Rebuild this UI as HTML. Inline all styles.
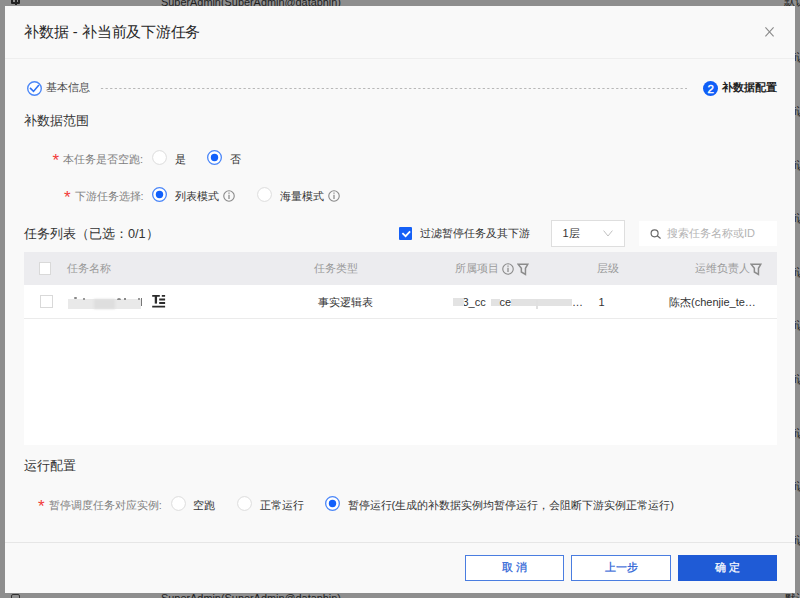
<!DOCTYPE html>
<html><head><meta charset="utf-8">
<style>
*{margin:0;padding:0;box-sizing:border-box}
html,body{width:800px;height:598px;overflow:hidden}
body{background:#8e8e8e;font-family:"Liberation Sans",sans-serif;position:relative;color:#333}
.a{position:absolute;white-space:nowrap}
.bgt{color:#1e1e1e;font-size:10.9px;line-height:14px}
.modal{position:absolute;left:5px;top:6px;width:790px;height:587px;background:#f9f9f9}
.t{font-size:11px;line-height:1;font-weight:500}
.lbl{color:#808080}
.req{color:#f23a3a;font-size:17px;line-height:1;font-weight:normal}
.r{position:absolute}
.btn{position:absolute;top:555px;height:25.5px;border:1px solid #4a7de0;background:#fff;color:#2c63d6;font-size:11px;display:flex;align-items:center;justify-content:center;font-weight:500;-webkit-text-stroke:0.25px currentColor}
.hd{color:#9a9a9a}
</style></head><body>
<!-- background page fragments -->
<div class="a bgt" style="left:161px;top:-5.5px">SuperAdmin(SuperAdmin@dataphin)</div>
<div class="a bgt" style="left:161px;top:590.5px">SuperAdmin(SuperAdmin@dataphin)</div>

<div class="a" style="left:11px;top:-4px;width:9px;height:8px;border:2px solid #222;border-radius:1px"></div>
<div class="a" style="left:15px;top:-4px;width:1.5px;height:9px;background:#222"></div>
<div class="a" style="left:11px;top:594px;width:9px;height:8px;border:1.5px solid #333;border-radius:2px"></div>
<div class="a bgt" style="left:784px;top:-6px;font-size:11px">默认</div>
<div class="a bgt" style="left:785px;top:591px;font-size:11px">默认</div>
<div class="a bgt" style="left:794px;top:50.4px;font-size:11px">i认</div>
<div class="a bgt" style="left:794px;top:104.0px;font-size:11px">i认</div>
<div class="a bgt" style="left:794px;top:157.6px;font-size:11px">i认</div>
<div class="a bgt" style="left:794px;top:211.2px;font-size:11px">i认</div>
<div class="a bgt" style="left:794px;top:264.8px;font-size:11px">i认</div>
<div class="a bgt" style="left:794px;top:318.4px;font-size:11px">i认</div>
<div class="a bgt" style="left:794px;top:372.0px;font-size:11px">i认</div>
<div class="a bgt" style="left:794px;top:425.6px;font-size:11px">i认</div>
<div class="a bgt" style="left:794px;top:479.2px;font-size:11px">i认</div>
<div class="a bgt" style="left:794px;top:532.8px;font-size:11px">i认</div>
<div class="modal"></div>

<!-- header -->
<div class="a" style="left:24px;top:22.2px;font-size:14.6px;letter-spacing:-0.25px;word-spacing:0.8px;line-height:20px;color:#262626;font-weight:500">补数据 - 补当前及下游任务</div>
<svg class="a" style="left:765.2px;top:27.2px" width="9" height="9.7" viewBox="0 0 9 9.7"><path d="M0.4 0.4L8.6 9.3M8.6 0.4L0.4 9.3" stroke="#8a8a8a" stroke-width="1.1" fill="none"/></svg>
<div class="a" style="left:5px;top:58px;width:790px;height:1px;background:#eeeeee"></div>

<!-- steps -->
<svg class="a" style="left:27px;top:80.75px" width="15" height="15" viewBox="0 0 15 15"><circle cx="7.5" cy="7.5" r="6.8" fill="#fff" stroke="#4d88f7" stroke-width="1.4"/><path d="M3.0 6.9L6.5 10.4L11.9 4.0" stroke="#2f72f5" stroke-width="1.6" fill="none"/></svg>
<div class="a t" style="left:46px;top:82.3px;color:#4a4a4a">基本信息</div>
<svg class="a" style="left:100px;top:88px" width="588" height="1"><line x1="0.9" y1="0.5" x2="587" y2="0.5" stroke="#b8b8b8" stroke-width="1" stroke-dasharray="2.3 2.3"/></svg>
<div class="a" style="left:703.3px;top:80.75px;width:15px;height:15px;border-radius:50%;background:#0f5ef7;color:#fff;font-size:11.6px;font-weight:normal;-webkit-text-stroke:0.4px #fff;text-align:center;line-height:15.5px">2</div>
<div class="a t" style="left:722px;top:82.3px;color:#222;font-weight:bold">补数据配置</div>

<div class="a" style="left:24px;top:113.8px;font-size:12.7px;line-height:14px;color:#333;font-weight:500">补数据范围</div>

<!-- row1 -->
<div class="a req" style="left:52.5px;top:152px">*</div>
<div class="a t lbl" style="left:63px;top:154px">本任务是否空跑:</div>
<svg class="r" style="left:151.9px;top:150.25px" width="15" height="15"><circle cx="7.5" cy="7.5" r="6.9" fill="#fff" stroke="#dcdcdc" stroke-width="1"/></svg>
<div class="a t" style="left:175px;top:154px">是</div>
<svg class="r" style="left:207.1px;top:150px" width="15" height="15"><circle cx="7.5" cy="7.5" r="6.85" fill="#fff" stroke="#4a86f8" stroke-width="1.3"/><circle cx="7.5" cy="7.5" r="3.7" fill="#1160fb"/></svg>
<div class="a t" style="left:230px;top:154px">否</div>

<!-- row2 -->
<div class="a req" style="left:64px;top:188.5px">*</div>
<div class="a t lbl" style="left:74.5px;top:190.5px">下游任务选择:</div>
<svg class="r" style="left:152.2px;top:186.9px" width="15" height="15"><circle cx="7.5" cy="7.5" r="6.85" fill="#fff" stroke="#4a86f8" stroke-width="1.3"/><circle cx="7.5" cy="7.5" r="3.7" fill="#1160fb"/></svg>
<div class="a t" style="left:175px;top:190.5px">列表模式</div>
<svg class="a" style="left:223.15px;top:189.55px" width="12" height="12" viewBox="0 0 12 12"><circle cx="6" cy="6" r="5.25" fill="none" stroke="#8a8a8a" stroke-width="1.1"/><path d="M6 2.6V3.8M6 4.7V9" stroke="#8a8a8a" stroke-width="1.25"/></svg>
<svg class="r" style="left:256.9px;top:186.7px" width="15" height="15"><circle cx="7.5" cy="7.5" r="6.9" fill="#fff" stroke="#dcdcdc" stroke-width="1"/></svg>
<div class="a t" style="left:279.5px;top:190.5px">海量模式</div>
<svg class="a" style="left:327.8px;top:189.5px" width="12" height="12" viewBox="0 0 12 12"><circle cx="6" cy="6" r="5.25" fill="none" stroke="#8a8a8a" stroke-width="1.1"/><path d="M6 2.6V3.8M6 4.7V9" stroke="#8a8a8a" stroke-width="1.25"/></svg>

<!-- task list header -->
<div class="a" style="left:24px;top:226.5px;font-size:12.7px;line-height:14px;color:#333;font-weight:500">任务列表（已选：0/1）</div>
<div class="a" style="left:398.5px;top:227px;width:13px;height:13px;background:#1560f6;border-radius:1px"></div>
<svg class="a" style="left:398.5px;top:227px" width="13" height="13" viewBox="0 0 13 13"><path d="M3.4 6.1L6.6 9.2L11.1 4.4" stroke="#fff" stroke-width="1.8" fill="none"/></svg>
<div class="a t" style="left:419.5px;top:228px;color:#333">过滤暂停任务及其下游</div>
<div class="a" style="left:551px;top:219.5px;width:74px;height:27px;border:1px solid #dedede;background:#fff"></div>
<div class="a t" style="left:562.5px;top:228px;color:#333">1层</div>
<svg class="a" style="left:603px;top:229.5px" width="10" height="7" viewBox="0 0 10 7"><path d="M0.6 0.6L5 6L9.4 0.6" stroke="#c0c0c0" stroke-width="1" fill="none"/></svg>
<div class="a" style="left:639px;top:220.5px;width:138px;height:25.5px;background:#fff"></div>
<svg class="a" style="left:650px;top:228.5px" width="12" height="10" viewBox="0 0 12 10"><circle cx="4.6" cy="4.3" r="3.5" fill="none" stroke="#666" stroke-width="1.15"/><path d="M7.2 6.8L10.6 9.4" stroke="#666" stroke-width="1.2"/></svg>
<div class="a t" style="left:667px;top:228px;color:#b3b3b3">搜索任务名称或ID</div>

<!-- table -->
<div class="a" style="left:24px;top:252px;width:753px;height:33px;background:#ececef"></div>
<div class="a" style="left:24px;top:285px;width:753px;height:160px;background:#fff"></div>
<div class="a" style="left:24px;top:318px;width:753px;height:1px;background:#ebebeb"></div>

<!-- table header cells -->
<div class="a" style="left:38.5px;top:262px;width:12.5px;height:12.5px;border:1px solid #d9d9d9;background:#fff"></div>
<div class="a t hd" style="left:67.3px;top:263px">任务名称</div>
<div class="a t hd" style="left:313.5px;top:263px">任务类型</div>
<div class="a t hd" style="left:455px;top:263px">所属项目</div>
<svg class="a" style="left:501.85px;top:263.2px" width="12" height="12" viewBox="0 0 12 12"><circle cx="6" cy="6" r="5.25" fill="none" stroke="#8a8a8a" stroke-width="1.1"/><path d="M6 2.6V3.8M6 4.7V9" stroke="#8a8a8a" stroke-width="1.25"/></svg>
<svg class="a" style="left:516.5px;top:262.5px" width="13" height="13" viewBox="0 0 13 13"><path d="M1.3 1.35H10.75L8.45 5.3V11.35L4.35 9V5.3Z" fill="none" stroke="#8c8c8c" stroke-width="1.5" stroke-linejoin="miter"/></svg>
<div class="a t hd" style="left:597px;top:263px">层级</div>
<div class="a t hd" style="left:695px;top:263px">运维负责人</div>
<svg class="a" style="left:750px;top:262.5px" width="13" height="13" viewBox="0 0 13 13"><path d="M1.3 1.35H10.75L8.45 5.3V11.35L4.35 9V5.3Z" fill="none" stroke="#8c8c8c" stroke-width="1.5" stroke-linejoin="miter"/></svg>

<!-- row -->
<div class="a" style="left:40px;top:295px;width:13px;height:12.5px;border:1px solid #d9d9d9;background:#fff"></div>
<div class="a" style="left:68px;top:299px;width:73px;height:9.5px;background:#e9e9e9;filter:blur(0.7px)"></div>
<div class="a" style="left:94px;top:299px;width:21px;height:9.5px;background:#dedede;filter:blur(1px)"></div>
<div class="a" style="left:74px;top:297px;width:3px;height:2px;background:#888;border-radius:1px;filter:blur(0.5px)"></div>
<div class="a" style="left:83px;top:297.5px;width:2px;height:2px;background:#999;filter:blur(0.5px)"></div>
<div class="a" style="left:116.5px;top:297.5px;width:4px;height:2px;background:#888;border-radius:2px 2px 0 0;filter:blur(0.4px)"></div>
<div class="a" style="left:124px;top:297.5px;width:2px;height:2px;background:#888;filter:blur(0.4px)"></div>
<div class="a" style="left:138px;top:297.5px;width:2px;height:2px;background:#999;filter:blur(0.4px)"></div>
<div class="a" style="left:141px;top:298px;width:1.3px;height:7.5px;background:#777;filter:blur(0.3px)"></div>
<svg class="a" style="left:152px;top:295px" width="14" height="13" viewBox="0 0 14 13"><path d="M0.2 0.9H7.8M9.8 0.9H13.1M7.2 4.5H13.1M7.2 8H13.1M0.2 11.7H13.1" stroke="#2b2b2b" stroke-width="1.8" fill="none"/><path d="M3.9 0.9V8.6" stroke="#2b2b2b" stroke-width="2.3" fill="none"/></svg>
<div class="a t" style="left:317.5px;top:297px;color:#333">事实逻辑表</div>
<div class="a" style="left:454px;top:298.5px;width:118px;height:7.5px;background:#e2e2e2;filter:blur(0.6px)"></div>
<div class="a" style="left:462px;top:296px;width:29px;height:12px;background:#fff"></div>
<div class="a" style="left:499.5px;top:296px;width:11.5px;height:12px;background:#fff"></div>
<div class="a t" style="left:462.5px;top:297px;color:#333;font-weight:normal">3_cc</div>
<div class="a t" style="left:499.5px;top:297px;color:#333;font-weight:normal">ce</div>
<div class="a" style="left:461px;top:298.5px;width:3px;height:7.5px;background:#e6e6e6;filter:blur(0.4px)"></div>
<div class="a" style="left:453px;top:298px;width:10px;height:8px;background:#e3e3e3;filter:blur(0.6px)"></div>
<div class="a" style="left:536px;top:300px;width:2px;height:9px;background:#e0e0e0"></div>
<div class="a t" style="left:572px;top:297px;color:#333;font-weight:normal">…</div>
<div class="a t" style="left:598.5px;top:297px;color:#333;font-weight:normal">1</div>
<div class="a t" style="left:669px;top:297px;color:#333">陈杰<span style="font-weight:normal">(chenjie_te…</span></div>

<!-- run config -->
<div class="a" style="left:24px;top:459.4px;font-size:12.7px;line-height:14px;color:#333;font-weight:500">运行配置</div>
<div class="a req" style="left:38px;top:498px">*</div>
<div class="a t lbl" style="left:48.75px;top:499.75px">暂停调度任务对应实例:</div>
<svg class="r" style="left:170.9px;top:495.8px" width="15" height="15"><circle cx="7.5" cy="7.5" r="6.9" fill="#fff" stroke="#dcdcdc" stroke-width="1"/></svg>
<div class="a t" style="left:193px;top:499.75px">空跑</div>
<svg class="r" style="left:236.6px;top:495.8px" width="15" height="15"><circle cx="7.5" cy="7.5" r="6.9" fill="#fff" stroke="#dcdcdc" stroke-width="1"/></svg>
<div class="a t" style="left:259.5px;top:499.75px">正常运行</div>
<svg class="r" style="left:325px;top:495.8px" width="15" height="15"><circle cx="7.5" cy="7.5" r="6.85" fill="#fff" stroke="#4a86f8" stroke-width="1.3"/><circle cx="7.5" cy="7.5" r="3.7" fill="#1160fb"/></svg>
<div class="a t" style="left:347.5px;top:499.75px">暂停运行(生成的补数据实例均暂停运行，会阻断下游实例正常运行)</div>

<!-- footer -->
<div class="a" style="left:5px;top:542px;width:790px;height:1px;background:#e6e6e6"></div>
<div class="btn" style="left:465px;width:99px">取&nbsp;消</div>
<div class="btn" style="left:571px;width:100px">上一步</div>
<div class="btn" style="left:677.5px;width:99.5px;background:#1f5bd6;border-color:#1f5bd6;color:#fff">确&nbsp;定</div>
</body></html>
